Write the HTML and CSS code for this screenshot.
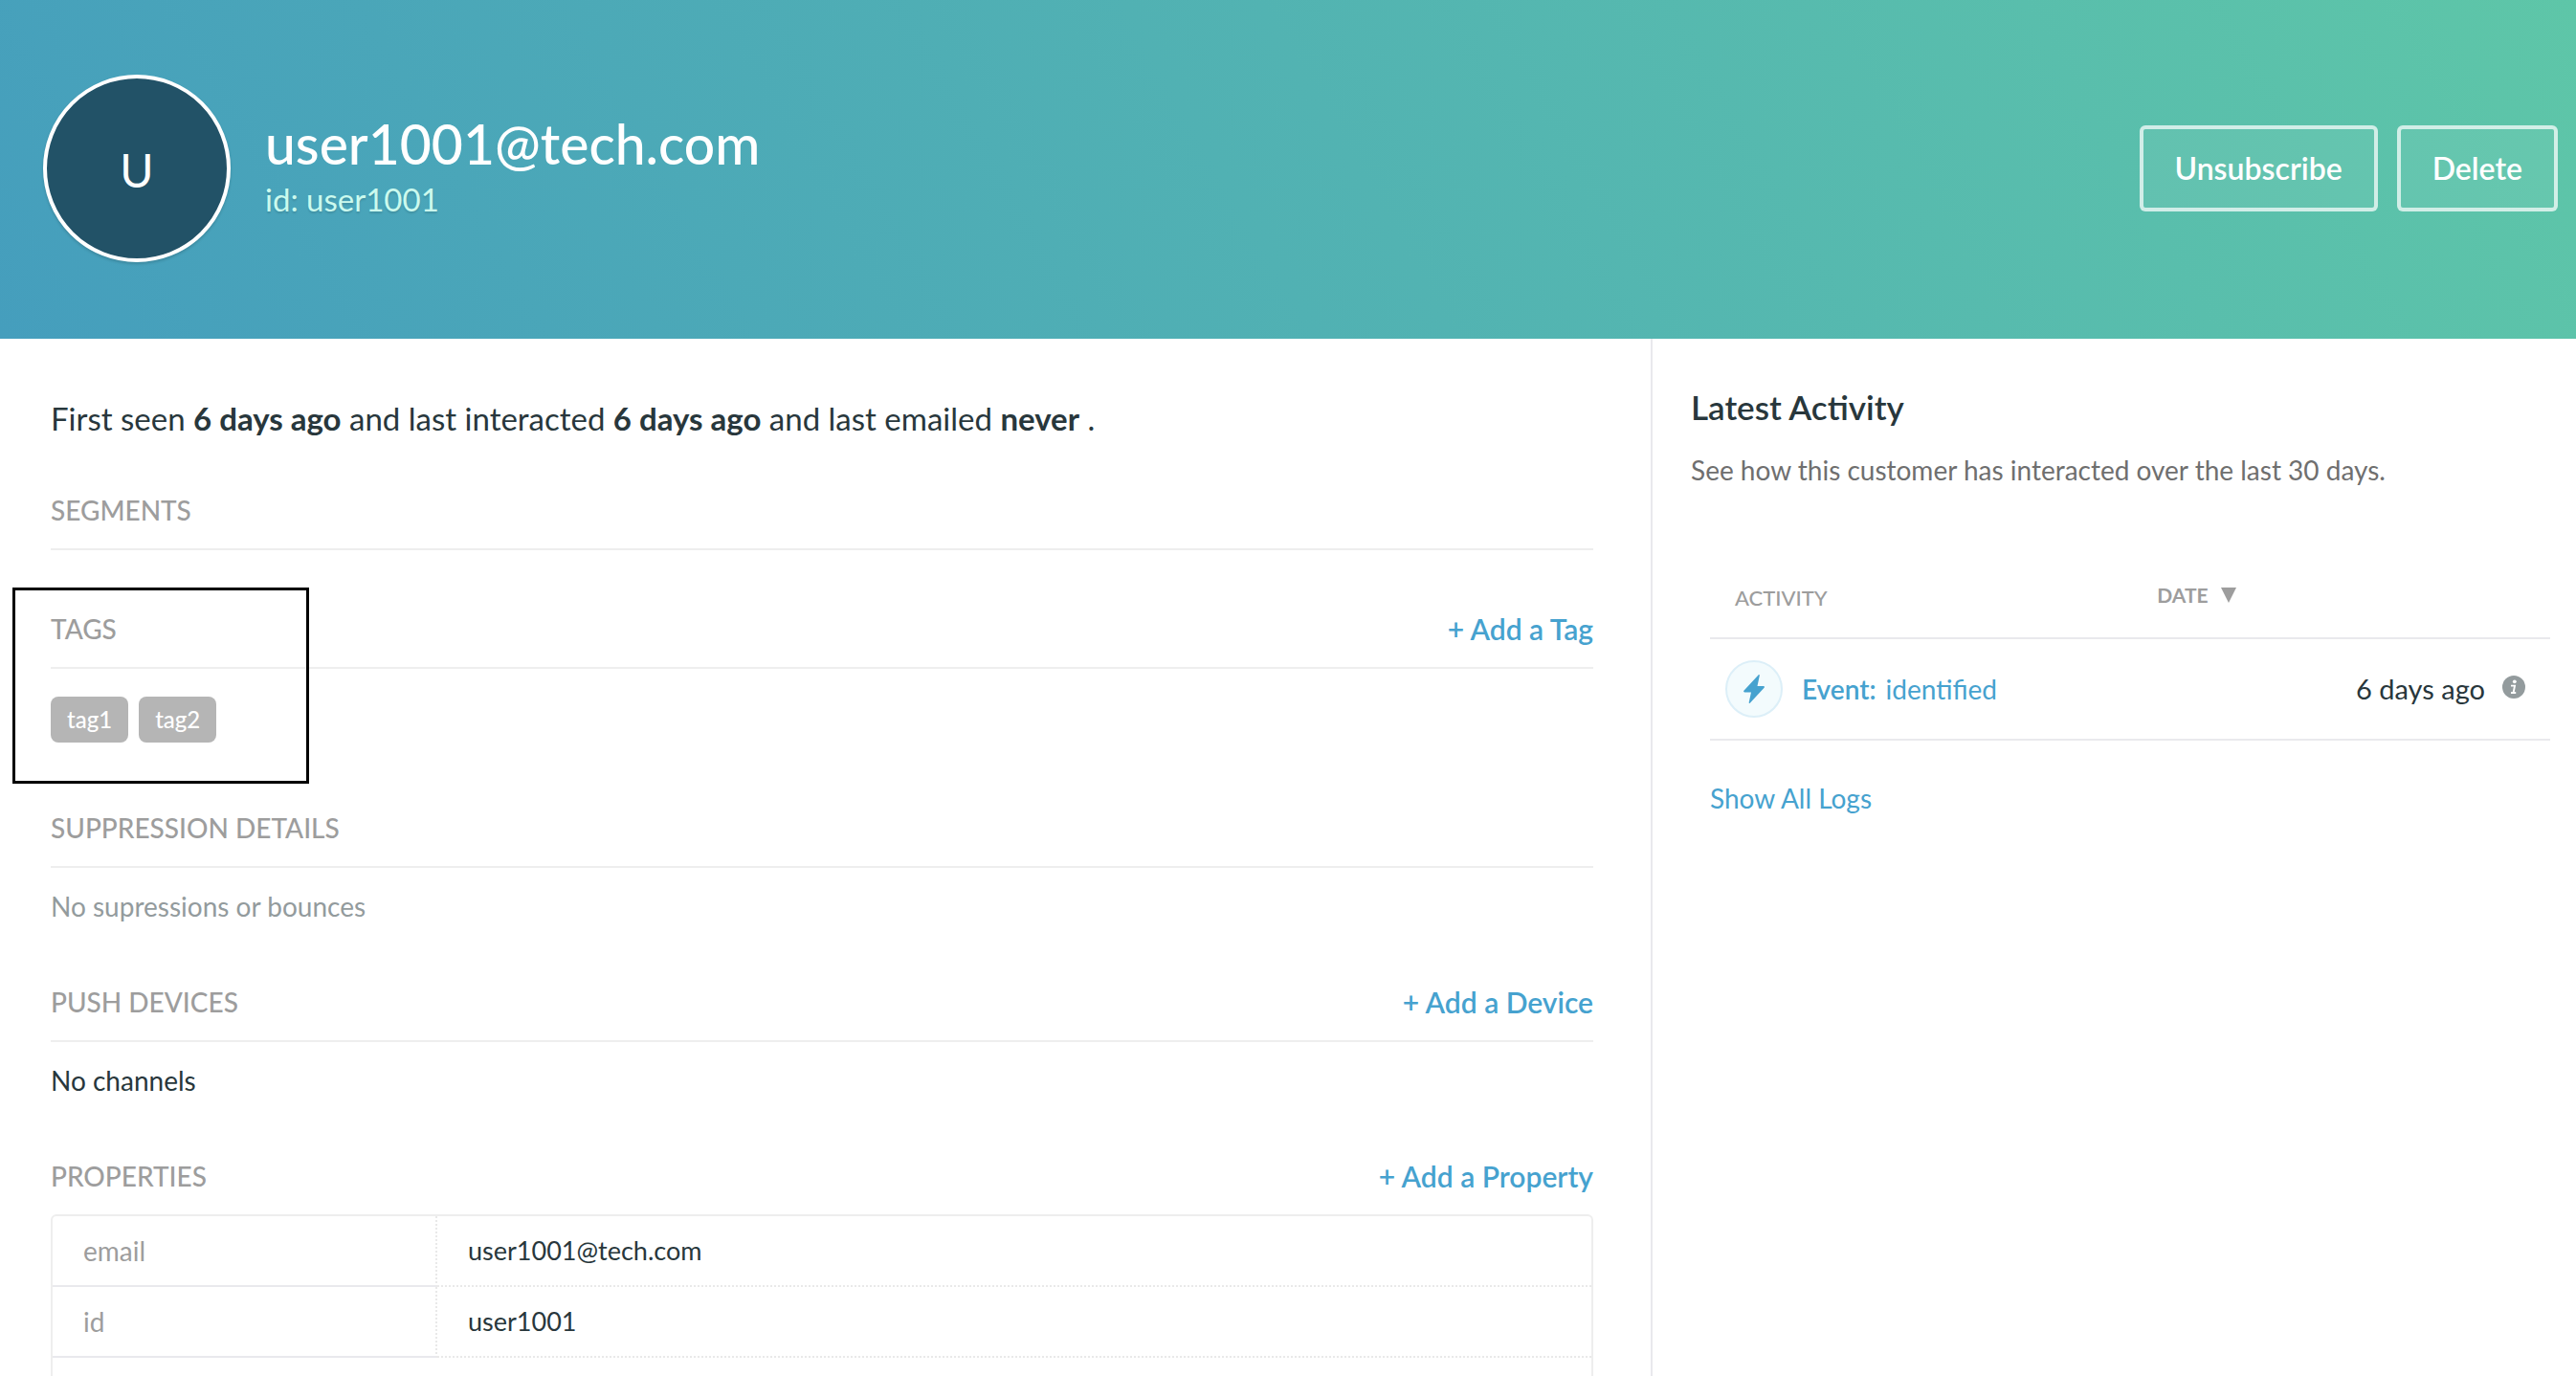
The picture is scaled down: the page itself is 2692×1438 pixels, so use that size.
FILE: index.html
```html
<!DOCTYPE html>
<html lang="en">
<head>
<meta charset="utf-8">
<title>user1001@tech.com</title>
<link rel="stylesheet" href="styles.css">
</head>
<body>
<div class="page">
  <header class="hero">
    <div class="avatar" aria-hidden="true">U</div>
    <div class="identity">
      <h1 class="identity-email">user1001@tech.com</h1>
      <p class="identity-id">id: user1001</p>
    </div>
    <div class="hero-actions">
      <button type="button" class="hero-button">Unsubscribe</button>
      <button type="button" class="hero-button">Delete</button>
    </div>
  </header>

  <div class="columns">
    <main class="profile">
      <p class="summary">First seen <strong>6 days ago</strong> and last interacted <strong>6 days ago</strong> and last emailed <strong>never</strong> .</p>

      <section class="section">
        <div class="section-head"><h2 class="section-title">Segments</h2></div>
      </section>

      <section class="section section-tags">
        <div class="section-head">
          <h2 class="section-title">Tags</h2>
          <a class="section-add" href="#add-tag">+ Add a Tag</a>
        </div>
        <ul class="tags">
          <li class="tag">tag1</li>
          <li class="tag">tag2</li>
        </ul>
        <div class="highlight"></div>
      </section>

      <section class="section">
        <div class="section-head"><h2 class="section-title">Suppression Details</h2></div>
        <p class="section-text section-text-muted">No supressions or bounces</p>
      </section>

      <section class="section">
        <div class="section-head">
          <h2 class="section-title">Push Devices</h2>
          <a class="section-add" href="#add-device">+ Add a Device</a>
        </div>
        <p class="section-text">No channels</p>
      </section>

      <section class="section">
        <div class="section-head section-head-plain">
          <h2 class="section-title">Properties</h2>
          <a class="section-add" href="#add-property">+ Add a Property</a>
        </div>
        <table class="properties">
          <tbody>
            <tr><th scope="row">email</th><td>user1001@tech.com</td></tr>
            <tr><th scope="row">id</th><td>user1001</td></tr>
            <tr><td class="properties-more" colspan="2"></td></tr>
          </tbody>
        </table>
      </section>
    </main>

    <aside class="activity">
      <h2 class="activity-title">Latest Activity</h2>
      <p class="activity-intro">See how this customer has interacted over the last 30 days.</p>
      <table class="log">
        <thead>
          <tr>
            <th scope="col" class="log-name">Activity</th>
            <th scope="col" class="log-date">Date
              <svg class="sort-icon" viewBox="0 0 16 16" aria-hidden="true"><path d="M0 0h16L8 16z" fill="currentColor"/></svg></th>
          </tr>
        </thead>
        <tbody>
          <tr>
            <td>
              <a class="event" href="#event">
                <span class="event-icon">
                  <svg viewBox="0 0 22 30" aria-hidden="true"><path d="M15.500 .6c.6-.9 1.500-.5 1.300.5l-2.300 10.900h6.300c1 0 1.400.8.8 1.700L7 29.400c-.6.9-1.500.5-1.300-.5L8 18.500H1.200c-1 0-1.400-.8-.8-1.700z" fill="currentColor"/></svg>
                </span>
                <b>Event:</b>
                <span>identified</span>
              </a>
            </td>
            <td>
              <div class="when">6 days ago
                <svg class="info-icon" viewBox="0 0 24 24" aria-hidden="true"><circle cx="12" cy="12" r="12" fill="#939b9d"/><circle cx="12.800" cy="6.300" r="1.900" fill="#fff"/><path d="M9 10.600h4l-1.400 7.200M9 18h5.200" fill="none" stroke="#fff" stroke-width="1.900"/></svg>
              </div>
            </td>
          </tr>
        </tbody>
      </table>
      <a class="show-all" href="#logs">Show All Logs</a>
    </aside>
  </div>
</div>
</body>
</html>
```
FILE: styles.css
```css
* { box-sizing: border-box; }

body {
  margin: 0;
  background: #fff;
  color: #28373c;
  font-family: Lato, "Liberation Sans", sans-serif;
  font-size: 28px;
  line-height: 40px;
}

h1, h2, p, ul { margin: 0; padding: 0; font-weight: 400; }
a { color: #46a2cf; text-decoration: none; }
table { border-spacing: 0; }
th { font-weight: 400; text-align: left; }

.page {
  display: flex;
  flex-direction: column;
  height: 100vh;
  overflow: hidden;
}

/* Header banner */
.hero {
  display: flex;
  flex: none;
  align-items: center;
  padding: 78px 19px 80px 45px;
  background: linear-gradient(60deg, #459ebd, #5ec6a8);
}
.avatar {
  width: 196px;
  height: 196px;
  border: 4px solid #fff;
  border-radius: 50%;
  background: #225267;
  box-shadow: 0 2px 3px rgba(0, 0, 0, .15);
  color: #fff;
  font-size: 48px;
  line-height: 192px;
  text-align: center;
}
.identity { margin-left: 36px; }
.identity-email {
  color: #fff;
  font-size: 57px;
  font-weight: 500;
  line-height: 64px;
}
.identity-id {
  color: #cbfaee;
  font-size: 33px;
  line-height: 52px;
  text-shadow: 0 2px 2px rgba(0, 0, 0, .12);
}
.hero-actions {
  display: flex;
  gap: 20px;
  margin-left: auto;
}
.hero-button {
  height: 90px;
  padding: 0 33px;
  border: 4px solid rgba(255, 255, 255, .72);
  border-radius: 6px;
  background: rgba(255, 255, 255, .06);
  background-clip: padding-box;
  color: #fff;
  font: 600 32px/40px Lato, "Liberation Sans", sans-serif;
}

.columns {
  display: grid;
  grid-template-columns: 64.08% 35.92%;
  flex: 1;
  min-height: 0;
}

/* Profile column */
.profile { padding: 63px 60px 0 53px; }
.summary {
  margin-bottom: 56px;
  font-size: 33px;
}
.section { margin-bottom: 60px; }
.section-head {
  display: flex;
  align-items: center;
  justify-content: space-between;
  padding-bottom: 20px;
  border-bottom: 2px solid #eee;
}
.section-head-plain { border-bottom: 0; }
.section-title {
  color: #9d9d9d;
  font-size: 28px;
  font-weight: 500;
  text-transform: uppercase;
}
.section-add {
  font-size: 30px;
  font-weight: 600;
}
.section-text { padding-top: 20px; }
.section-text-muted { color: #939b9d; }

.section-tags {
  position: relative;
  padding-top: 2px;
}
.tags {
  display: flex;
  gap: 11px;
  padding: 29px 0 9px;
  list-style: none;
}
.tag {
  height: 48px;
  padding: 0 17px;
  border-radius: 8px;
  background: #b5b5b5;
  color: #fff;
  font-size: 24px;
  font-weight: 500;
  line-height: 48px;
}
.highlight {
  position: absolute;
  top: -21px;
  left: -40px;
  width: 310px;
  height: 205px;
  border: 3px solid #000;
}

.properties {
  width: 100%;
  border: 2px solid #eee;
  border-radius: 6px;
}
.properties th,
.properties td {
  height: 74px;
  padding: 0 32px;
  border-bottom: 2px dotted #e9e9e9;
}
.properties td { font-size: 27px; }
.properties th {
  width: 25%;
  border-right: 2px dotted #e9e9e9;
  border-bottom: 2px solid #e9e9ed;
  color: #9d9d9d;
}
.properties .properties-more { border-bottom: 0; }

/* Activity column */
.activity {
  padding: 51px 27px 0 40px;
  border-left: 2px solid #e9e9ed;
}
.activity-title {
  font-size: 35px;
  font-weight: 600;
}
.activity-intro {
  margin-top: 26px;
  color: #6f6f6f;
}
.log {
  width: calc(100% - 20px);
  margin: 79px 0 40px 20px;
}
.log th {
  padding: 15px 0 21px;
  border-bottom: 2px solid #e9e9ed;
  color: #9d9d9d;
  font-size: 22px;
  font-weight: 500;
  text-transform: uppercase;
}
.log .log-name {
  width: 53%;
  padding-left: 26px;
}
.log .log-date {
  padding: 12px 0 24px 2px;
  font-size: 21px;
  font-weight: 700;
}
.sort-icon {
  width: 16px;
  height: 16px;
  margin-left: 8px;
}
.log td {
  height: 106px;
  padding: 0;
  border-bottom: 2px solid #e9e9ed;
}
.event {
  display: flex;
  align-items: center;
  gap: 10px;
  padding-left: 16px;
}
.event b { font-weight: 600; }
.event-icon {
  display: flex;
  align-items: center;
  justify-content: center;
  width: 60px;
  height: 60px;
  margin-right: 10px;
  border: 2px solid #dceff8;
  border-radius: 50%;
  background: #f3fbfd;
}
.event-icon svg { width: 22px; height: 30px; }
.when {
  display: flex;
  align-items: center;
  justify-content: flex-end;
  gap: 18px;
  padding-right: 26px;
  font-size: 29px;
}
.info-icon {
  width: 24px;
  height: 24px;
  margin-bottom: 4px;
}
.show-all { margin-left: 20px; }
```
